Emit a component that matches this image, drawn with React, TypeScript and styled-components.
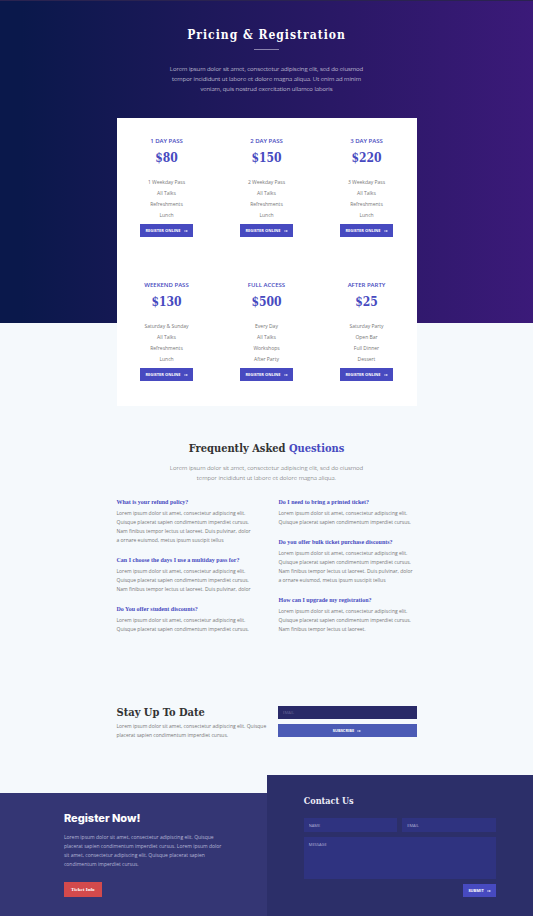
import React from "react";
import styled, { createGlobalStyle } from "styled-components";

const sans = `"Open Sans", "Noto Sans", sans-serif`;
const serif = `"DejaVu Serif Condensed", "DejaVu Serif", serif`;
const smallSerif = `"Liberation Serif", serif`;

const GlobalStyle = createGlobalStyle`
  *, *::before, *::after { box-sizing: border-box; }
  body {
    margin: 0;
    background: #f5f9fc;
    color: #777;
    font-family: ${sans};
    font-size: 5px;
    line-height: 9px;
  }
  h1, h2, h3, p, ul { margin: 0; padding: 0; }
  button, input, textarea { font-family: inherit; border: 0; border-radius: 0; margin: 0; }
`;

const Container = styled.div`
  width: 100%;
  max-width: 300px;
  margin: 0 auto;
`;

const Hero = styled.header`
  padding-top: 24px;
  border-top: 1px solid #2a2350;
  background: linear-gradient(90deg, #0a184b 4%, #1c1859 36%, #2b1867 66%, #3b1a79 100%);
`;

const HeroTitle = styled.h1`
  color: #fff;
  font-family: ${serif};
  font-size: 12px;
  line-height: 20px;
  letter-spacing: 1px;
  text-align: center;
`;

const Divider = styled.hr`
  width: 25px;
  height: 1px;
  margin: 4px auto 0;
  border: 0;
  background: #8a83ad;
`;

const Intro = styled.p<{ $light?: boolean }>`
  font-size: 6px;
  font-weight: 300;
  line-height: 10px;
  text-align: center;
  white-space: pre-line;
  color: ${(p) => (p.$light ? "#f2f0fa" : "#555")};
`;

const HeroIntro = styled(Intro)`
  padding: 14px 0 24px;
`;

const PriceCard = styled(Container)`
  display: grid;
  grid-template-columns: repeat(3, 1fr);
  margin-bottom: -83px;
  background: #fff;
`;

const HeroFoot = styled.div`
  display: flow-root;
`;

const Plan = styled.section`
  display: flex;
  flex-direction: column;
  align-items: center;
  padding: 17px 0 25px;
  text-align: center;
`;

const PlanName = styled.h2`
  color: #474ac0;
  font-size: 6px;
  font-weight: 600;
  line-height: 12px;
`;

const Price = styled.p`
  color: #474ac0;
  font-family: ${serif};
  font-size: 12px;
  font-weight: 700;
  line-height: 22px;
`;

const Features = styled.ul`
  margin: 8px 0 3px;
  list-style: none;
  line-height: 11px;
`;

const Button = styled.button<{ $tone?: string }>`
  display: inline-flex;
  align-items: center;
  justify-content: center;
  gap: 3px;
  height: 13px;
  padding: 0 5px;
  background: ${(p) => p.$tone ?? "#474ac0"};
  color: #fff;
  font-size: 4px;
  font-weight: 700;
  line-height: 9px;
  white-space: nowrap;
  cursor: pointer;
`;

const Arrow = styled.svg`
  width: 4px;
  height: 4px;
  fill: none;
  stroke: currentColor;
  stroke-width: 1;
`;

const Faq = styled.section`
  padding-top: 117px;
`;

const SectionTitle = styled.h2<{ $center?: boolean }>`
  color: #333;
  font-family: ${serif};
  font-size: 11px;
  line-height: 18px;
  text-align: ${(p) => (p.$center ? "center" : "left")};

  span { color: #474ac0; }
`;

const FaqIntro = styled(Intro)`
  padding-top: 5px;
`;

const FaqColumns = styled.div`
  display: grid;
  grid-template-columns: repeat(2, minmax(0, 1fr));
  gap: 24px;
  margin-top: 14px;
`;

const FaqColumn = styled.div`
  display: flex;
  flex-direction: column;
  gap: 10px;
`;

const Question = styled.h3`
  margin-bottom: 2px;
  color: #474ac0;
  font-family: ${smallSerif};
  font-size: 6px;
  line-height: 10px;
  white-space: nowrap;
`;

const Copy = styled.p<{ $light?: boolean }>`
  color: ${(p) => (p.$light ? "#b5b6d6" : "#777")};
  font-size: 5px;
  line-height: 9px;
  white-space: pre-line;
`;

const Newsletter = styled(Container)`
  display: grid;
  grid-template-columns: 1fr 139px;
  gap: 8px;
  padding: 70px 0 35px;
`;

const NewsletterForm = styled.form`
  display: flex;
  flex-direction: column;
  gap: 5px;
  padding-top: 2px;
`;

const Field = styled.input<{ $dark?: boolean }>`
  width: 100%;
  height: ${(p) => (p.$dark ? 13 : 14)}px;
  padding: 0 5px;
  background: ${(p) => (p.$dark ? "#292a68" : "#2f3380")};
  color: #fff;
  font-size: 4px;

  &::placeholder { color: ${(p) => (p.$dark ? "#66679a" : "#b0b1d8")}; opacity: 1; }
`;

const MessageField = styled.textarea`
  display: block;
  grid-column: 1 / -1;
  width: 100%;
  height: 42px;
  padding: 3px 5px;
  background: #2f3380;
  color: #fff;
  font-size: 4px;
  line-height: 9px;
  resize: none;

  &::placeholder { color: #b0b1d8; opacity: 1; }
`;

const Footer = styled.footer`
  display: grid;
  grid-template-columns: 1fr 1fr;
  align-items: end;
`;

const RegisterPanel = styled.section`
  min-height: 123px;
  padding: 16px 0 19px 24%;
  background: #343674;
`;

const RegisterTitle = styled.h2`
  margin-bottom: 6px;
  color: #fff;
  font-family: Inter, sans-serif;
  font-size: 11px;
  font-weight: 800;
  line-height: 18px;
`;

const TicketButton = styled(Button)`
  height: 15px;
  margin-top: 13px;
  padding: 0 7px;
  font-family: ${smallSerif};
  font-size: 5px;
`;

const ContactPanel = styled.section`
  min-height: 141px;
  padding: 18px 14% 19px;
  background: #2c2f69;
`;

const ContactTitle = styled.h2`
  margin-bottom: 9px;
  color: #eeeef8;
  font-family: ${serif};
  font-size: 9px;
  line-height: 16px;
`;

const ContactForm = styled.form`
  display: grid;
  grid-template-columns: 1fr 1fr;
  gap: 5px;
`;

const SubmitButton = styled(Button)`
  grid-column: 2;
  justify-self: end;
`;

const ArrowIcon = () => (
  <Arrow viewBox="0 0 6 6" aria-hidden="true">
    <path d="M0 3h5M3.5 1.5 5 3 3.5 4.5" />
  </Arrow>
);

const plans = [
  { name: "1 DAY PASS", price: "$80", features: ["1 Weekday Pass", "All Talks", "Refreshments", "Lunch"] },
  { name: "2 DAY PASS", price: "$150", features: ["2 Weekday Pass", "All Talks", "Refreshments", "Lunch"] },
  { name: "3 DAY PASS", price: "$220", features: ["3 Weekday Pass", "All Talks", "Refreshments", "Lunch"] },
  { name: "WEEKEND PASS", price: "$130", features: ["Saturday & Sunday", "All Talks", "Refreshments", "Lunch"] },
  { name: "FULL ACCESS", price: "$500", features: ["Every Day", "All Talks", "Workshops", "After Party"] },
  { name: "AFTER PARTY", price: "$25", features: ["Saturday Party", "Open Bar", "Full Dinner", "Dessert"] },
];

const two = "Lorem ipsum dolor sit amet, consectetur adipiscing elit.\nQuisque placerat sapien condimentum imperdiet cursus.";
const four = `${two}\nNam finibus tempor lectus ut laoreet. Duis pulvinar, dolor\na ornare euismod, metus ipsum suscipit tellus`;

const faqs = [
  [
    { q: "What is your refund policy?", a: four },
    { q: "Can I choose the days I use a multiday pass for?", a: `${two}\nNam finibus tempor lectus ut laoreet. Duis pulvinar, dolor` },
    { q: "Do You offer student discounts?", a: two },
  ],
  [
    { q: "Do I need to bring a printed ticket?", a: two },
    { q: "Do you offer bulk ticket purchase discounts?", a: four },
    { q: "How can I upgrade my registration?", a: `${two}\nNam finibus tempor lectus ut laoreet.` },
  ],
];

export default function App() {
  return (
    <>
      <GlobalStyle />
      <Hero>
        <HeroTitle>Pricing &amp; Registration</HeroTitle>
        <Divider />
        <HeroIntro $light>
          {"Lorem ipsum dolor sit amet, consectetur adipiscing elit, sed do eiusmod\ntempor incididunt ut labore et dolore magna aliqua. Ut enim ad minim\nveniam, quis nostrud exercitation ullamco laboris"}
        </HeroIntro>
        <HeroFoot>
          <PriceCard>
            {plans.map((plan) => (
              <Plan key={plan.name}>
                <PlanName>{plan.name}</PlanName>
                <Price>{plan.price}</Price>
                <Features>
                  {plan.features.map((f) => <li key={f}>{f}</li>)}
                </Features>
                <Button type="button">REGISTER ONLINE <ArrowIcon /></Button>
              </Plan>
            ))}
          </PriceCard>
        </HeroFoot>
      </Hero>
      <main>
        <Faq>
          <Container>
            <SectionTitle $center>Frequently Asked <span>Questions</span></SectionTitle>
            <FaqIntro>
              {"Lorem ipsum dolor sit amet, consectetur adipiscing elit, sed do eiusmod\ntempor incididunt ut labore et dolore magna aliqua."}
            </FaqIntro>
            <FaqColumns>
              {faqs.map((column, i) => (
                <FaqColumn key={i}>
                  {column.map((item) => (
                    <article key={item.q}>
                      <Question>{item.q}</Question>
                      <Copy>{item.a}</Copy>
                    </article>
                  ))}
                </FaqColumn>
              ))}
            </FaqColumns>
          </Container>
        </Faq>
        <Newsletter>
          <div>
            <SectionTitle>Stay Up To Date</SectionTitle>
            <Copy>{"Lorem ipsum dolor sit amet, consectetur adipiscing elit. Quisque\nplacerat sapien condimentum imperdiet cursus."}</Copy>
          </div>
          <NewsletterForm>
            <Field $dark type="email" aria-label="Email" placeholder="EMAIL" />
            <Button type="button" $tone="#4b5bb5">SUBSCRIBE <ArrowIcon /></Button>
          </NewsletterForm>
        </Newsletter>
      </main>
      <Footer>
        <RegisterPanel>
          <RegisterTitle>Register Now!</RegisterTitle>
          <Copy $light>{"Lorem ipsum dolor sit amet, consectetur adipiscing elit. Quisque\nplacerat sapien condimentum imperdiet cursus. Lorem ipsum dolor\nsit amet, consectetur adipiscing elit. Quisque placerat sapien\ncondimentum imperdiet cursus."}</Copy>
          <TicketButton type="button" $tone="#d34a4c">Ticket Info</TicketButton>
        </RegisterPanel>
        <ContactPanel>
          <ContactTitle>Contact Us</ContactTitle>
          <ContactForm>
            <Field aria-label="Name" placeholder="NAME" />
            <Field type="email" aria-label="Email" placeholder="EMAIL" />
            <MessageField aria-label="Message" placeholder="MESSAGE" />
            <SubmitButton type="button">SUBMIT <ArrowIcon /></SubmitButton>
          </ContactForm>
        </ContactPanel>
      </Footer>
    </>
  );
}
